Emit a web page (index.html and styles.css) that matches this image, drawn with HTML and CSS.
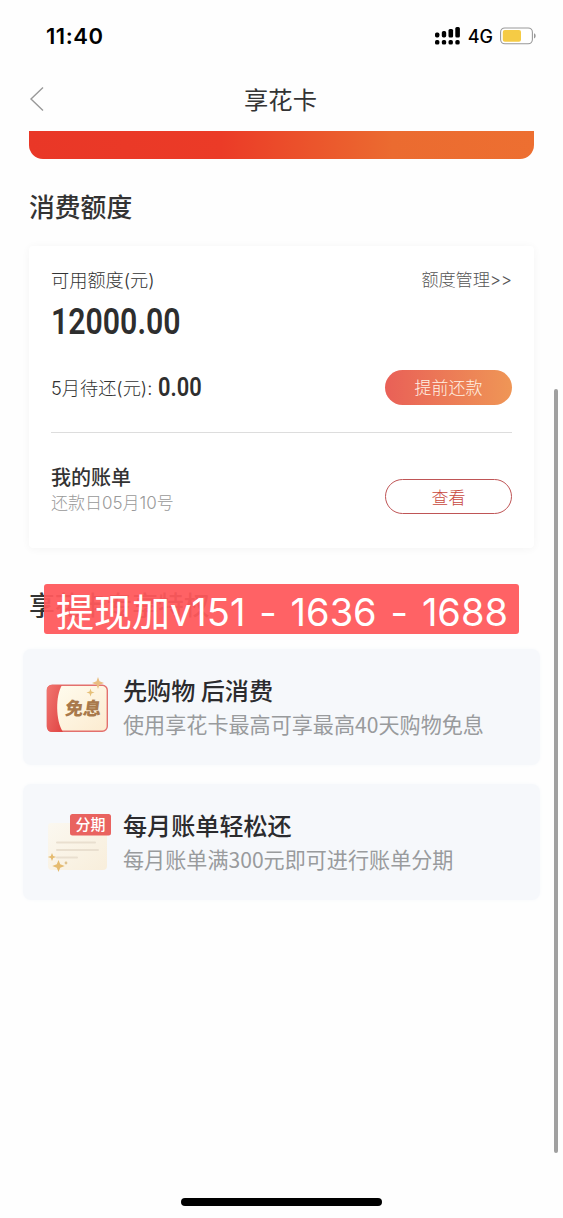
FILE: index.html
```html
<!DOCTYPE html>
<html lang="zh-CN">
<head>
<meta charset="utf-8">
<title>享花卡</title>
<link rel="stylesheet" href="styles.css">
</head>
<body>
<div class="phone">
  <header class="status">
    <span class="time">11:40</span>
    <div class="status-right">
      <svg class="signal" width="26" height="18" viewBox="0 0 26 18">
        <g fill="#000">
          <rect x="0" y="5.5" width="4.4" height="5" rx="1.7"/><rect x="6.8" y="4" width="4.4" height="6.5" rx="1.7"/><rect x="13.5" y="2" width="4.6" height="8.5" rx="1.5"/><rect x="20.3" y="0" width="4.6" height="10.5" rx="1.5"/>
          <rect x="0" y="13" width="4.4" height="4.6" rx="1.7"/><rect x="6.8" y="13" width="4.4" height="4.6" rx="1.7"/><rect x="13.5" y="13" width="4.4" height="4.6" rx="1.7"/><rect x="20.3" y="13" width="4.4" height="4.6" rx="1.7"/>
        </g>
      </svg>
      <span class="net">4G</span>
      <svg class="battery" width="37" height="18" viewBox="0 0 37 18">
        <rect x=".6" y="1" width="31.8" height="15.8" rx="4.2" fill="#fff" stroke="#999" stroke-width="1.1"/>
        <rect x="2.8" y="3" width="18.2" height="11.8" rx="2" fill="#f5cb45"/>
        <path d="M34 6.3c2.2.8 2.2 4.4 0 5.2z" fill="#999"/>
      </svg>
    </div>
  </header>
  <nav class="nav">
    <svg class="back" width="16" height="26" viewBox="0 0 16 26"><path d="M14 1.5L2 13l12 11.5" fill="none" stroke="#999" stroke-width="1.4"/></svg>
    <h1 class="nav-title">享花卡</h1>
  </nav>
  <main class="content">
    <div class="hero"></div>
    <h2 class="section-title">消费额度</h2>
    <section class="card">
      <div class="row label-row"><span class="label">可用额度(元)</span><span class="manage">额度管理&gt;&gt;</span></div>
      <div class="amount"><span class="din">12000.00</span></div>
      <div class="row due-row">
        <div class="due"><span class="label">5月待还(元):</span><span class="din due-num">0.00</span></div>
        <button class="btn btn-fill">提前还款</button>
      </div>
      <div class="row bill-row">
        <div class="bill"><span class="bill-title">我的账单</span><span class="bill-date">还款日05月10号</span></div>
        <button class="btn btn-line">查看</button>
      </div>
    </section>
    <div class="perk-head">
      <h2 class="section-title">享花卡专享特权</h2>
      <div class="notice"><span>提现加v151</span><span>-</span><span>1636</span><span>-</span><span>1688</span></div>
    </div>
    <section class="perk">
      <svg class="perk-icon icon-card" width="64" height="60" viewBox="0 0 64 60">
        <defs>
          <linearGradient id="red" x1="0" y1="0" x2="1" y2="1"><stop offset="0" stop-color="#f17670"/><stop offset="1" stop-color="#e04443"/></linearGradient>
          <linearGradient id="cream" x1="0" y1="0" x2="1" y2="1"><stop offset="0" stop-color="#fffdf0"/><stop offset="1" stop-color="#fcebd0"/></linearGradient>
        </defs>
        <rect x="1.3" y="10.3" width="60" height="46" rx="5" fill="url(#cream)" stroke="#e3706d" stroke-width="1.4"/>
        <path d="M6 10h10c-6.500 11-6.500 35 1 47H6q-5 0-5-5V15q0-5 5-5z" fill="url(#red)"/>
        <text class="icon-text-gold" transform="translate(18.500 39.500) skewX(-8)">免息</text>
        <path d="M52 2l1.500 4.200L58 8l-4.500 1.700L52 14l-1.500-4.300L46 8l4.500-1.800z" fill="#e9bd80"/>
        <path d="M44.500 13.500l1 3 3 1-3 1-1 3-1-3-3-1 3-1z" fill="#e6c078"/>
      </svg>
      <div class="perk-text"><h3>先购物 后消费</h3><p>使用享花卡最高可享最高40天购物免息</p></div>
    </section>
    <section class="perk">
      <svg class="perk-icon icon-bill" width="64" height="60" viewBox="0 0 64 60">
        <defs><linearGradient id="paper" x1="0" y1="0" x2="1" y2="1"><stop offset="0" stop-color="#fbf8f0"/><stop offset="1" stop-color="#f8eedb"/></linearGradient></defs>
        <path d="M5 9h21v10h33q2 0 2 2v31q0 4-4 4H6q-4 0-4-4V12q0-3 3-3z" fill="url(#paper)"/>
        <g stroke="#e9dfcf" stroke-width="2" stroke-linecap="round"><path d="M11 28.500h38M11 36h41M11 43.500h20"/></g>
        <rect x="24" y="0" width="41" height="21.500" rx="2.500" fill="#e96360"/>
        <text class="icon-text-white" x="29.500" y="16.200">分期</text>
        <path d="M6 39l1.200 3 3 1-3 1L6 47l-1.200-3-3-1 3-1zM12.500 46l1.700 4.300 4.500 1.700-4.500 1.700L12.500 58l-1.700-4.300L6.300 52l4.500-1.700z" fill="#e5bb6f"/>
        <circle cx="20" cy="49" r="1.400" fill="#dfc28d"/>
      </svg>
      <div class="perk-text"><h3>每月账单轻松还</h3><p>每月账单满300元即可进行账单分期</p></div>
    </section>
  </main>
  <div class="scrollbar"></div>
  <div class="home-indicator"></div>
</div>
</body>
</html>
```
FILE: styles.css
```css
* { box-sizing: border-box; margin: 0; padding: 0; }
body { background: #fefefe; font-family: "Noto Sans CJK SC", sans-serif; color: #333; }
.phone { position: relative; width: 563px; height: 1218px; overflow: hidden; white-space: nowrap; display: flex; flex-direction: column; }
.status { height: 72px; padding: 0 26px 0 46px; display: flex; justify-content: space-between; align-items: center; font-family: Inter, sans-serif; color: #000; }
.time { font-size: 22px; font-weight: 600; line-height: 24px; letter-spacing: .55px; }
.status-right { display: flex; align-items: center; }
.net { font-size: 18px; font-weight: 500; line-height: 20px; margin-left: 7px; margin-right: 7px; padding-top: 1px; }
.nav { height: 59px; display: grid; grid-template-columns: 60px 1fr 62px; align-items: center; padding-bottom: 6px; }
.back { margin-left: 29px; }
.nav-title { font-size: 24.3px; line-height: 30px; font-weight: 400; text-align: center; }
.content { padding: 0 23px; }
.hero { height: 28px; margin: 0 6px; border-radius: 0 0 14px 14px; background: linear-gradient(90deg, #e93727 0%, #eb3b27 38%, #eb6b30 72%, #ed6f31 100%); }
.section-title { font-size: 25.8px; line-height: 36px; font-weight: 500; margin-left: 6px; }
.hero + .section-title { margin-top: 29px; }
.card { height: 302px; margin: 22px 6px 0; padding: 20px 22px 0; background: #fff; border-radius: 4px; box-shadow: 0 1px 8px rgba(0,0,0,.045); }
.row { display: flex; justify-content: space-between; align-items: center; }
.label-row { height: 28px; line-height: 26px; padding-bottom: 1px; }
.label { font-family: Inter, "Noto Sans CJK SC", sans-serif; font-size: 18.2px; font-weight: 300; }
.manage { font-family: Inter, "Noto Sans CJK SC", sans-serif; font-size: 17.2px; font-weight: 300; color: #555; letter-spacing: -.1px; }
.amount { height: 56px; display: flex; align-items: center; }
.din { display: inline-block; font-family: Roboto, sans-serif; font-weight: 600; font-size: 36px; line-height: 40px; transform: scaleX(.84); transform-origin: left center; color: #2e2e2e; }
.due-row { height: 75px; padding-bottom: 1px; }
.due { position: relative; display: flex; align-items: center; gap: 6px; }
.due-num { font-size: 26px; line-height: 30px; }
.btn { width: 127px; height: 35px; border-radius: 18px; border: 0; font: 300 17px/33px "Noto Sans CJK SC", sans-serif; text-align: center; padding-bottom: 1px; }
.btn-fill { color: #fff1e4; background: linear-gradient(90deg, #e96057, #ef9656); }
.btn-line { color: #c8483d; background: #fff; border: 1px solid #bf5556; line-height: 31px; }
.bill-row { border-top: 1px solid #ddd; margin-top: 7px; padding-top: 30px; align-items: flex-start; }
.bill { display: flex; flex-direction: column; }
.bill-title { font-size: 20px; line-height: 28px; font-weight: 500; }
.bill-date { font-family: Inter, "Noto Sans CJK SC", sans-serif; font-size: 17px; line-height: 24px; font-weight: 300; color: #999; }
.btn-line { margin-top: 16px; }
.perk-head { position: relative; margin-top: 38px; height: 63px; }
.notice { position: absolute; left: 21px; top: -2px; width: 475px; height: 50px; border-radius: 3px; background: rgba(255, 88, 91, .94); color: #fff; font: 400 38px/56px Inter, "Noto Sans CJK SC", sans-serif; display: flex; justify-content: space-between; padding: 0 11px 0 12px; }
.perk { height: 116px; margin-bottom: 19px; padding-left: 23px; border-radius: 8px; background: #f6f8fb; box-shadow: 0 0 4px #f8fafc; display: flex; align-items: center; }
.perk-icon { overflow: visible; }
.icon-card { margin-bottom: 5px; }
.icon-bill { margin-top: 3px; }
.perk-text { margin-left: 13px; }
.perk-text h3 { font-size: 24.1px; line-height: 34px; font-weight: 500; color: #2b2b2e; }
.perk-text p { font-size: 21.1px; line-height: 34px; font-weight: 400; color: #999b9d; }
.icon-text-gold { font-size: 18px; font-weight: 900; fill: #a9794b; }
.icon-text-white { font-size: 15px; font-weight: 500; fill: #fff; }
.scrollbar { position: absolute; left: 554px; top: 389px; width: 4px; height: 764px; border-radius: 2px; background: #a0a0a0; }
.home-indicator { position: absolute; left: 181px; top: 1198px; width: 201px; height: 8px; border-radius: 4px; background: #000; }
```
